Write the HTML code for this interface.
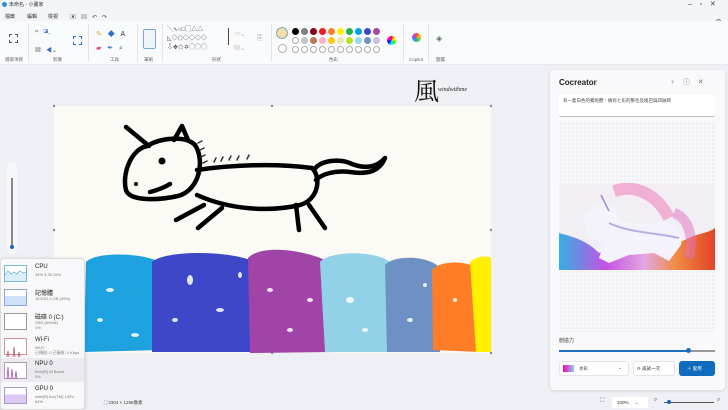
<!DOCTYPE html>
<html><head><meta charset="utf-8"><style>
*{margin:0;padding:0;box-sizing:border-box}
body{width:728px;height:410px;overflow:hidden;background:#eef0f6;font-family:"Liberation Sans","Noto Sans CJK TC",sans-serif;position:relative;color:#222}
.a{position:absolute}
.t{font-size:5px;color:#333;white-space:nowrap}
.lbl{font-size:4.5px;color:#666;position:absolute;top:57px}
.c{position:absolute;width:7px;height:7px;border-radius:50%}
.o{border:0.6px solid #aaa;background:#fff}
.sep{position:absolute;top:24px;width:1px;height:38px;background:#e2e4ea}
.tm{position:absolute;left:4px;width:80px;height:22px}
.tm .g{position:absolute;left:0;top:2px;width:23px;height:17px;border:0.7px solid #8cb;background:#fff}
.tm .n{position:absolute;left:31px;top:1px;font-size:6px;color:#222}
.tm .s{position:absolute;left:31px;top:9px;font-size:4px;color:#777;line-height:5px;white-space:nowrap}
</style></head><body>
<div class="a" style="left:0;top:0;width:728px;height:21px;background:#f3f4f8"></div>
<div class="a" style="left:2px;top:2px;width:5px;height:5px;border-radius:50%;background:#2a8fd6"></div>
<div class="a t" style="left:9px;top:1px;font-size:5px">未命名 - 小畫家</div>
<div class="a t" style="left:688px;top:0;font-size:7px;color:#444">–&nbsp;&nbsp;&nbsp;&nbsp;▫&nbsp;&nbsp;&nbsp;&nbsp;✕</div>
<div class="a t" style="left:5px;top:13px">檔案</div>
<div class="a t" style="left:27px;top:13px">編輯</div>
<div class="a t" style="left:48px;top:13px">檢視</div>
<div class="a t" style="left:70px;top:12px;font-size:6px;color:#555">▣&nbsp;&nbsp;&nbsp;▤&nbsp;&nbsp;&nbsp;↶&nbsp;&nbsp;&nbsp;↷</div>
<div class="a" style="left:716px;top:19px;width:5px;height:5px;border-radius:50%;border:1px solid #777"></div>
<div class="a" style="left:0;top:21px;width:728px;height:44px;background:#f9fafc;border-bottom:1px solid #e6e8ee"></div>
<div class="a" style="left:9px;top:34px;width:9px;height:9px;border:1px dashed #555"></div>
<div class="lbl" style="left:5px">選取項目</div>
<div class="sep" style="left:28px"></div>
<div class="a t" style="left:35px;top:29px;font-size:6px;color:#888">⌗&nbsp;&nbsp;&nbsp;<span style="color:#2a6fc9">◪</span>⌄</div>
<div class="a t" style="left:35px;top:45px;font-size:6px;color:#555">▦&nbsp;&nbsp;&nbsp;<span style="color:#2a6fc9">◀</span>⌄</div>
<div class="a" style="left:73px;top:36px;width:9px;height:9px;border:1px dashed #2a6fc9"></div>
<div class="lbl" style="left:53px">影像</div>
<div class="sep" style="left:88px"></div>
<div class="a t" style="left:96px;top:29px;font-size:7px"><span style="color:#e0a020">✎</span>&nbsp;&nbsp;&nbsp;<span style="color:#2a6fc9">◆</span>&nbsp;&nbsp;&nbsp;A</div>
<div class="a t" style="left:96px;top:44px;font-size:7px"><span style="color:#e05080">▰</span>&nbsp;&nbsp;&nbsp;<span style="color:#2a6fc9">✒</span>&nbsp;&nbsp;&nbsp;<span style="color:#555">⌕</span></div>
<div class="lbl" style="left:110px">工具</div>
<div class="sep" style="left:137px"></div>
<div class="a" style="left:143px;top:29px;width:13px;height:20px;border:1px solid #7aa7dd;border-radius:2px;background:#eef4fc"></div>
<div class="lbl" style="left:144px">筆刷</div>
<div class="sep" style="left:162px"></div>
<div class="a t" style="left:167px;top:26px;font-size:6px;color:#444;line-height:9px">╲∿○□▢△△<br>◺◇⬠◇◇◇◇<br>⇩✥☆✡◯◯◯</div>
<div class="a" style="left:228px;top:28px;width:1px;height:17px;background:#444"></div>
<div class="a t" style="left:234px;top:28px;font-size:6px;color:#aaa;line-height:14px">▱⌄<br>▤⌄</div>
<div class="a t" style="left:257px;top:35px;font-size:7px;color:#aaa">⎘</div>
<div class="lbl" style="left:212px">形狀</div>
<div class="sep" style="left:271px"></div>
<div class="c" style="left:276px;top:27px;width:12px;height:12px;background:#f0dfa8;border:1px solid #8ab"></div>
<div class="c o" style="left:278px;top:44px;width:9px;height:9px"></div>
<div class="c" style="left:292px;top:28px;background:#000"></div>
<div class="c" style="left:301px;top:28px;background:#7f7f7f"></div>
<div class="c" style="left:310px;top:28px;background:#880015"></div>
<div class="c" style="left:319px;top:28px;background:#ed1c24"></div>
<div class="c" style="left:328px;top:28px;background:#ff7f27"></div>
<div class="c" style="left:337px;top:28px;background:#fff200"></div>
<div class="c" style="left:346px;top:28px;background:#22b14c"></div>
<div class="c" style="left:355px;top:28px;background:#00a2e8"></div>
<div class="c" style="left:364px;top:28px;background:#3f48cc"></div>
<div class="c" style="left:373px;top:28px;background:#a349a4"></div>
<div class="c o" style="left:292px;top:37px"></div>
<div class="c" style="left:301px;top:37px;background:#c3c3c3"></div>
<div class="c" style="left:310px;top:37px;background:#b97a57"></div>
<div class="c" style="left:319px;top:37px;background:#ffaec9"></div>
<div class="c" style="left:328px;top:37px;background:#ffc90e"></div>
<div class="c" style="left:337px;top:37px;background:#efe4b0"></div>
<div class="c" style="left:346px;top:37px;background:#b5e61d"></div>
<div class="c" style="left:355px;top:37px;background:#99d9ea"></div>
<div class="c" style="left:364px;top:37px;background:#7092be"></div>
<div class="c" style="left:373px;top:37px;background:#c8bfe7"></div>
<div class="c o" style="left:292px;top:46px"></div><div class="c o" style="left:301px;top:46px"></div><div class="c o" style="left:310px;top:46px"></div><div class="c o" style="left:319px;top:46px"></div><div class="c o" style="left:328px;top:46px"></div><div class="c o" style="left:337px;top:46px"></div><div class="c o" style="left:346px;top:46px"></div><div class="c o" style="left:355px;top:46px"></div><div class="c o" style="left:364px;top:46px"></div><div class="c o" style="left:373px;top:46px"></div>
<div class="c" style="left:387px;top:36px;width:9px;height:9px;background:conic-gradient(red,yellow,lime,cyan,blue,magenta,red)"></div>
<div class="lbl" style="left:329px">色彩</div>
<div class="sep" style="left:403px"></div>
<div class="c" style="left:412px;top:33px;width:9px;height:9px;background:conic-gradient(#f44,#fb0,#4c4,#29f,#a4f,#f44)"></div>
<div class="lbl" style="left:409px">Copilot</div>
<div class="sep" style="left:428px"></div>
<div class="a t" style="left:436px;top:34px;font-size:8px;color:#666">◈</div>
<div class="lbl" style="left:436px">圖層</div>
<div class="a" style="left:414px;top:72px;font-family:'Noto Serif CJK SC',serif;font-size:25px;color:#111">風</div>
<div class="a" style="left:438px;top:87px;font-family:'Liberation Serif',serif;font-style:italic;font-size:6px">windwithme</div>
<div class="a" style="left:7px;top:163px;width:10px;height:90px;background:#f6f7fa;border-radius:3px"></div>
<div class="a" style="left:11px;top:178px;width:2px;height:68px;background:#888"></div>
<div class="a" style="left:10px;top:245px;width:4px;height:4px;border-radius:50%;background:#1565c0"></div>
<div class="a" style="left:54px;top:106px;width:437px;height:247px;background:#fbfaf5"></div>
<svg class="a" style="left:0;top:0" width="728" height="410">
<g fill="#888"><circle cx="54" cy="106" r="1.2"/><circle cx="272" cy="106" r="1.2"/><circle cx="491" cy="106" r="1.2"/><circle cx="54" cy="230" r="1.2"/><circle cx="491" cy="230" r="1.2"/><circle cx="272" cy="353" r="1.2"/><circle cx="491" cy="353" r="1.2"/></g>
<g fill="none" stroke="#000" stroke-width="4.5" stroke-linecap="round" stroke-linejoin="round">
<path d="M126,127 L149,146"/>
<path d="M174,140 L182,126 L188,140"/>
<path d="M147,146 C130,150 122,175 126,190 C130,202 160,200 178,196 C200,190 205,160 195,145 C185,135 160,138 147,146"/>
<path d="M150,192 C158,190 165,187 170,184"/>
<path d="M197,170 C230,165 275,163 312,168 C322,178 318,200 300,205 C270,212 230,210 197,195"/>
<path d="M314,170 C320,160 340,158 352,164 C368,170 378,166 385,158 C380,170 370,175 350,172 C335,170 322,174 316,180"/>
<path d="M176,220 L204,205"/><path d="M198,228 L222,208"/><path d="M296,205 L299,230"/><path d="M309,205 L325,228"/>
</g>
<circle cx="162" cy="161" r="3.5"/><circle cx="136" cy="184" r="2"/>
<g stroke="#333" stroke-width="1.5" stroke-linecap="round"><path d="M198,143l4,-2M200,150l4,-2M201,157l4,-2M203,163l4,-2M214,162l2,-4M221,161l2,-4M229,160l2,-4M237,160l2,-4M247,159l2,-4"/></g>
<g>
<path d="M86,262 C95,252 140,252 160,262 L162,350 L84,352 Z" fill="#1ea2df"/>
<path d="M152,262 C165,250 230,250 255,262 L258,352 L152,352 Z" fill="#3f47c9"/>
<path d="M248,258 C260,245 300,248 330,262 L335,352 L250,353 Z" fill="#a044a8"/>
<path d="M320,262 C330,250 380,250 392,264 L394,352 L325,352 Z" fill="#93d2e6"/>
<path d="M385,265 C395,254 430,256 440,268 L440,352 L387,352 Z" fill="#6e90c2"/>
<path d="M432,270 C440,260 470,260 478,270 L480,352 L433,350 Z" fill="#ff7d27"/>
<path d="M470,262 C478,255 488,256 491,258 L491,352 L476,352 Z" fill="#fff000"/>
</g>
<g fill="#fff" opacity="0.85"><ellipse cx="110" cy="290" rx="4" ry="2"/><ellipse cx="190" cy="280" rx="3" ry="5"/><ellipse cx="220" cy="310" rx="4" ry="2"/><ellipse cx="290" cy="330" rx="3" ry="2"/><ellipse cx="350" cy="300" rx="4" ry="3"/><ellipse cx="410" cy="320" rx="3" ry="2"/><ellipse cx="455" cy="300" rx="2" ry="2"/><ellipse cx="135" cy="335" rx="4" ry="2"/><ellipse cx="175" cy="320" rx="3" ry="2"/><ellipse cx="270" cy="290" rx="3" ry="2"/><ellipse cx="100" cy="320" rx="3" ry="2"/><ellipse cx="240" cy="275" rx="2" ry="3"/><ellipse cx="310" cy="300" rx="3" ry="2"/><ellipse cx="365" cy="330" rx="3" ry="2"/><ellipse cx="425" cy="285" rx="2" ry="2"/></g>
</svg>
<div class="a" style="left:0;top:258px;width:85px;height:152px;background:#f8f8fa;border:1px solid #ddd;border-radius:4px;box-shadow:0 1px 4px rgba(0,0,0,.15)"></div>
<div class="tm" style="top:263px"><div class="g" style="background:linear-gradient(#fff 50%,#d9eef8 50%);border-color:#7bb7d8"></div><div class="n">CPU</div><div class="s">34% 3.39 GHz</div></div>
<div class="tm" style="top:287px"><div class="g" style="background:linear-gradient(#fff 40%,#cfe0fa 40%);border-color:#8aa8d8"></div><div class="n">記憶體</div><div class="s">15.5/31.4 GB (49%)</div></div>
<div class="tm" style="top:311px"><div class="g" style="border-color:#999"></div><div class="n">磁碟 0 (C:)</div><div class="s">SSD (NVMe)<br>1%</div></div>
<div class="tm" style="top:336px"><div class="g" style="border-color:#c99"></div><div class="n">Wi-Fi</div><div class="s">Wi-Fi<br>已傳送: 0 已接收: 0 Kbps</div></div>
<div class="a" style="left:1px;top:358px;width:83px;height:24px;background:#eceaf0"></div>
<div class="tm" style="top:360px"><div class="g" style="border-color:#b9a"></div><div class="n">NPU 0</div><div class="s">Intel(R) AI Boost<br>0%</div></div>
<div class="tm" style="top:385px"><div class="g" style="background:linear-gradient(#fff 45%,#dcc8f5 45%);border-color:#a9c"></div><div class="n">GPU 0</div><div class="s">Intel(R) Arc(TM) 140V...<br>54%</div></div>
<svg class="a" style="left:4px;top:263px" width="24" height="140"><path d="M1,12 l3,-4 l3,3 l3,-2 l3,2 l3,-3 l3,2 l4,-1" stroke="#3a9ad0" stroke-width=".6" fill="none"/><path d="M3,94 l1,-6 l1,6 M9,94 l1,-10 l1,10 M14,94 l1,-5 l1,5" stroke="#c04060" stroke-width=".7" fill="none"/><path d="M3,116 l1,-12 l1,12 M7,116 l1,-10 l1,10 M11,116 l1,-8 l1,8" stroke="#a050c0" stroke-width=".8" fill="none"/></svg>
<div class="a t" style="left:104px;top:400px;font-size:4.5px;color:#444">⛶ 2304 × 1296像素</div>
<div class="a" style="left:612px;top:397px;width:36px;height:11px;background:#fff;border-radius:2px"></div>
<div class="a t" style="left:617px;top:400px;font-size:4.5px">100%&nbsp;&nbsp;&nbsp;&nbsp;&nbsp;⌄</div>
<div class="a t" style="left:600px;top:398px;font-size:6px;color:#666">⛶</div>
<div class="a t" style="left:654px;top:397px;font-size:6px;color:#555">⌕</div>
<div class="a" style="left:664px;top:402px;width:50px;height:1px;background:#555"></div>
<div class="a" style="left:667px;top:400px;width:4px;height:4px;border-radius:50%;background:#1565c0"></div>
<div class="a t" style="left:717px;top:397px;font-size:6px;color:#555">⌕</div>
<div class="a" style="left:550px;top:70px;width:175px;height:320px;background:#f9f9fb;border-radius:4px;box-shadow:0 1px 3px rgba(0,0,0,.12)"></div>
<div class="a" style="left:559px;top:78px;font-size:8px;font-weight:bold">Cocreator</div>
<div class="a t" style="left:670px;top:77px;font-size:7px;color:#777">♀&nbsp;&nbsp;&nbsp;&nbsp;ⓘ&nbsp;&nbsp;&nbsp;&nbsp;✕</div>
<div class="a" style="left:559px;top:95px;width:156px;height:22px;background:#fff;border-bottom:1px solid #bbb;border-radius:2px"></div>
<div class="a t" style="left:563px;top:98px;font-size:4.5px;color:#444">有一隻白色的獨角獸，擁有七彩的鬃毛及尾巴與四肢蹄</div>
<div class="a" style="left:559px;top:122px;width:156px;height:210px;background-color:#f7f7f9;background-image:radial-gradient(#d4d4dc 0.5px,transparent 0.7px);background-size:4px 4px"></div>
<div class="a" style="left:559px;top:183px;width:156px;height:87px;background:#f1eff3"></div>
<svg class="a" style="left:559px;top:183px" width="156" height="87">
<defs><linearGradient id="b" x1="0" x2="1"><stop offset="0" stop-color="#20a8e0"/><stop offset=".3" stop-color="#c040e0"/><stop offset=".55" stop-color="#e0a0e0"/><stop offset=".75" stop-color="#f08030"/><stop offset="1" stop-color="#e03010"/></linearGradient></defs>
<path d="M0,50 C20,55 30,60 40,70 C70,60 100,70 130,55 C140,50 150,50 156,45 L156,87 L0,87Z" fill="url(#b)" opacity=".9"/>
<path d="M55,8 C80,0 100,15 110,35" stroke="#f07ab8" stroke-width="12" fill="none" opacity=".55"/>
<path d="M115,30 C130,35 135,55 130,75" stroke="#e070c0" stroke-width="10" fill="none" opacity=".5"/>
<path d="M25,35 C30,20 45,15 55,25 C60,40 70,42 95,40 C115,38 125,45 122,62 L110,78 L95,70 L70,72 L50,80 L40,75 L45,60 L30,55 Z" fill="#f4f2fb"/>
<path d="M50,40 C70,50 100,50 120,55" stroke="#8a80d8" stroke-width="2" fill="none" opacity=".6"/>
<path d="M42,12 L50,28" stroke="#9a8ad8" stroke-width="1.5"/>
</svg>
<div class="a t" style="left:559px;top:337px;font-size:5px">創造力</div>
<div class="a" style="left:559px;top:350px;width:130px;height:2px;background:#1e6fc4"></div>
<div class="a" style="left:689px;top:350px;width:26px;height:2px;background:#999"></div>
<div class="a" style="left:686px;top:348px;width:5px;height:5px;border-radius:50%;background:#1e6fc4"></div>
<div class="a" style="left:559px;top:361px;width:70px;height:15px;background:#fff;border:1px solid #e3e3e8;border-radius:3px"></div>
<div class="a" style="left:563px;top:365px;width:11px;height:7px;background:linear-gradient(90deg,#f0a,#8cf)"></div>
<div class="a t" style="left:579px;top:366px;font-size:4.5px">水彩</div>
<div class="a t" style="left:618px;top:365px;font-size:5px;color:#555">⌄</div>
<div class="a" style="left:633px;top:361px;width:42px;height:15px;background:#fff;border:1px solid #e3e3e8;border-radius:3px"></div>
<div class="a t" style="left:637px;top:366px;font-size:4.5px">⟳ 再試一次</div>
<div class="a" style="left:679px;top:361px;width:36px;height:15px;background:#0f6cbd;border-radius:3px"></div>
<div class="a t" style="left:687px;top:366px;font-size:4.5px;color:#fff">＋ 套用</div>
</body></html>
